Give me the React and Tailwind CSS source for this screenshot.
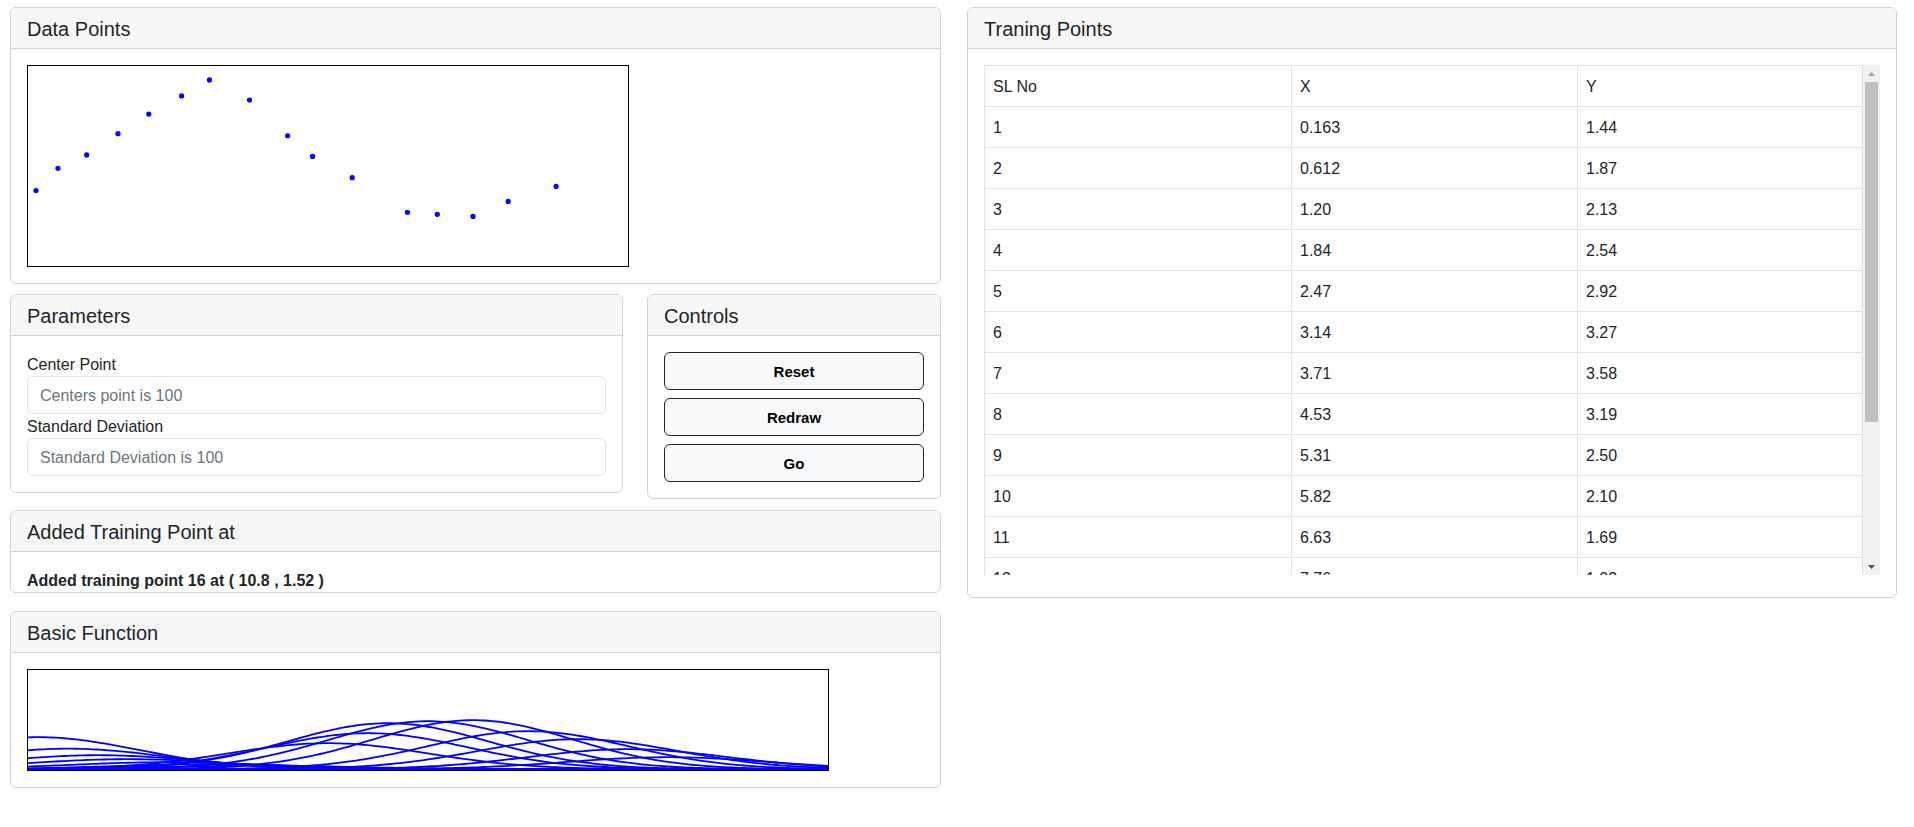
import React from "react";

const points = [
  [0.163, 1.44],
  [0.612, 1.87],
  [1.2, 2.13],
  [1.84, 2.54],
  [2.47, 2.92],
  [3.14, 3.27],
  [3.71, 3.58],
  [4.53, 3.19],
  [5.31, 2.5],
  [5.82, 2.1],
  [6.63, 1.69],
  [7.76, 1.02],
  [8.37, 0.98],
  [9.1, 0.94],
  [9.82, 1.23],
  [10.8, 1.52],
];

const fmt = (n) => (n < 1 ? n.toFixed(3) : n.toPrecision(3));

// center / amplitude of each basis curve, in canvas px
const bases = [
  [10, 32],
  [40, 20.5],
  [70, 14],
  [100, 10],
  [140, 7],
  [185, 5],
  [230, 3.5],
  [300, 26],
  [340, 36],
  [360, 46],
  [400, 48],
  [445, 49],
  [500, 38],
  [550, 30],
  [600, 20],
  [640, 12],
];

const gaussPath = (c, a) => {
  let d = "";
  for (let x = 0; x <= 800; x += 4) {
    const y = 99.2 - a * Math.exp(-((x - c) ** 2) / (2 * 100 * 100));
    d += `${x === 0 ? "M" : "L"}${x},${y.toFixed(2)} `;
  }
  return d;
};

function Card({ title, children, bodyClass = "p-4" }) {
  return (
    <div className="rounded-[6px] border border-[#d3d3d3] bg-white overflow-hidden">
      <div className="bg-[#f7f7f7] border-b border-[#d3d3d3] px-4 pt-[9px] pb-[7px]">
        <h5 className="text-[20px] leading-[24px] font-medium text-[#212529]">{title}</h5>
      </div>
      <div className={bodyClass}>{children}</div>
    </div>
  );
}

function ScrollBar() {
  return (
    <div className="w-[17px] h-full bg-[#f1f1f1] flex flex-col">
      <div className="h-[17px] flex items-center justify-center">
        <svg width="7" height="4" viewBox="0 0 7 4">
          <path d="M0 4 L3.5 0 L7 4 Z" fill="#a3a3a3" />
        </svg>
      </div>
      <div className="h-[340px] mx-[2px] bg-[#c1c1c1]" />
      <div className="flex-1" />
      <div className="h-[17px] flex items-center justify-center">
        <svg width="7" height="4" viewBox="0 0 7 4">
          <path d="M0 0 L7 0 L3.5 4 Z" fill="#505050" />
        </svg>
      </div>
    </div>
  );
}

export default function App() {
  const cell = "border border-[#dee2e6] px-2 pt-[9px] pb-[7px] leading-6 text-left font-normal";
  const input =
    "w-full h-[38px] rounded-[6px] border border-[#dee2e6] px-3 pt-[1px] outline-none placeholder:text-[#6c757d]";

  return (
    <div
      className="min-h-screen bg-white text-[#212529] text-[16px]"
      style={{ fontFamily: '"Liberation Sans", Arial, sans-serif' }}
    >
      <div className="flex items-start gap-[26px] pl-[10px] pt-[7px]">
        {/* LEFT COLUMN */}
        <div className="w-[931px] flex flex-col">
          <Card title="Data Points">
            <div className="w-[602px] h-[202px] border border-black">
              <svg width="600" height="200" className="block">
                {points.map(([x, y], i) => (
                  <circle key={i} cx={x * 48.9} cy={199 - y * 51.7} r="2.6" fill="#0000ff" />
                ))}
              </svg>
            </div>
          </Card>

          <div className="mt-[10px] flex items-start gap-[24px]">
            <div className="w-[613px]">
              <Card title="Parameters">
                <label className="block leading-6 pt-[1px] -mb-[1px]">Center Point</label>
                <input className={input} placeholder="Centers point is 100" />
                <label className="block leading-6 pt-[1px] -mb-[1px]">Standard Deviation</label>
                <input className={input} placeholder="Standard Deviation is 100" />
              </Card>
            </div>
            <div className="w-[294px]">
              <Card title="Controls">
                <div className="flex flex-col gap-2">
                  {["Reset", "Redraw", "Go"].map((b) => (
                    <button
                      key={b}
                      className="h-[38px] w-full rounded-[6px] border border-[#212529] bg-[#f8f9fa] pt-[2px] text-[15px] font-bold text-black"
                    >
                      {b}
                    </button>
                  ))}
                </div>
              </Card>
            </div>
          </div>

          <div className="mt-[11px]">
            <Card title="Added Training Point at" bodyClass="h-[40px] px-4 pt-[17px] overflow-hidden">
              <p className="font-bold leading-6">Added training point 16 at ( 10.8 , 1.52 )</p>
            </Card>
          </div>

          <div className="mt-[18px]">
            <Card title="Basic Function">
              <div className="w-[802px] h-[102px] border border-black">
                <svg width="800" height="100" className="block">
                  {bases.map(([c, a], i) => (
                    <path key={i} d={gaussPath(c, a)} fill="none" stroke="#0000ff" strokeWidth="1.8" />
                  ))}
                </svg>
              </div>
            </Card>
          </div>
        </div>

        {/* RIGHT COLUMN */}
        <div className="w-[930px]">
          <Card title="Traning Points" bodyClass="px-4 pt-4 pb-[22px]">
            <div className="h-[510px] flex overflow-hidden">
              <div className="flex-1 overflow-hidden">
                <table className="w-full border-collapse">
                  <thead>
                    <tr>
                      <th className={`${cell} w-[307px]`}>SL No</th>
                      <th className={`${cell} w-[286px]`}>X</th>
                      <th className={cell}>Y</th>
                    </tr>
                  </thead>
                  <tbody>
                    {points.map(([x, y], i) => (
                      <tr key={i}>
                        <td className={cell}>{i + 1}</td>
                        <td className={cell}>{fmt(x)}</td>
                        <td className={cell}>{fmt(y)}</td>
                      </tr>
                    ))}
                  </tbody>
                </table>
              </div>
              <ScrollBar />
            </div>
          </Card>
        </div>
      </div>
    </div>
  );
}
